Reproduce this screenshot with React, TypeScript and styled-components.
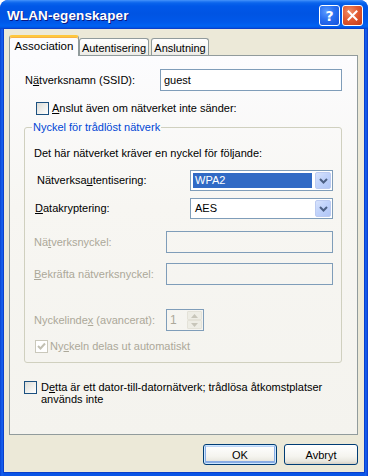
import React from "react";
import styled, { createGlobalStyle, css } from "styled-components";

const Global = createGlobalStyle`
  html, body { margin: 0; padding: 0; background: #ffffff; }
  body { font-family: "Liberation Sans", Arial, sans-serif; font-size: 11px; color: #000; }
  * { box-sizing: border-box; }
  u { text-decoration: underline; text-underline-offset: 1px; }
`;

const Window = styled.div`
  width: 368px;
  height: 476px;
  display: flex;
  flex-direction: column;
  background: linear-gradient(to right, #0843d0 0px, #1760ef 2px, #0a55e6 4px, #0a55e6 364px, #1760ef 366px, #0838c8 368px);
  border-radius: 8px 8px 0 0;
  overflow: hidden;
`;

const TitleBar = styled.div`
  height: 29px;
  flex: 0 0 29px;
  display: flex;
  align-items: center;
  padding: 0 5px 0 7px;
  background: linear-gradient(
    to bottom,
    #4a96fb 0px,
    #2a7ff5 1px,
    #0a64ec 3px,
    #0058e8 6px,
    #0054e3 14px,
    #0058ea 22px,
    #0062f2 26px,
    #0052e0 28px,
    #0045cc 29px
  );
  border-radius: 8px 8px 0 0;
`;

const TitleText = styled.div`
  font-family: "Liberation Sans", Arial, sans-serif;
  font-weight: bold;
  font-size: 13.5px;
  color: #ffffff;
  text-shadow: 1px 1px 0 #0a1883;
  padding-top: 2px;
  letter-spacing: 0.1px;
`;

const CaptionButtons = styled.div`
  margin-left: auto;
  display: flex;
  gap: 2px;
  padding-top: 2px;
`;

const CaptionButton = styled.div<{ $variant: "help" | "close" }>`
  width: 21px;
  height: 21px;
  border: 1px solid #ffffff;
  border-radius: 3px;
  display: flex;
  align-items: center;
  justify-content: center;
  color: #ffffff;
  font-family: "DejaVu Sans", sans-serif;
  font-weight: bold;
  font-size: 14px;
  ${(p) =>
    p.$variant === "help"
      ? css`
          background: radial-gradient(circle at 35% 30%, #5c9cff 0%, #2a6ff0 45%, #1450dc 100%);
        `
      : css`
          background: radial-gradient(circle at 35% 30%, #f0906a 0%, #e25b32 45%, #c43a17 100%);
        `}
`;

const Client = styled.div`
  flex: 1;
  margin: 0 4px 4px 4px;
  background: #ece9d8;
  box-shadow: 0 0 0 1px #0a3fcc;
  display: flex;
  flex-direction: column;
  padding: 6px 6px 0 5px;
`;

const TabStrip = styled.div`
  height: 20px;
  display: flex;
  align-items: flex-end;
  position: relative;
  z-index: 2;
`;

const Tab = styled.div<{ $active?: boolean; $width: number; $gap?: number }>`
  width: ${(p) => p.$width}px;
  margin-left: ${(p) => p.$gap ?? 0}px;
  border: 1px solid #919b9c;
  border-bottom: none;
  border-radius: 3px 3px 0 0;
  display: flex;
  justify-content: center;
  color: #000;
  ${(p) =>
    p.$active
      ? css`
          height: 21px;
          margin-bottom: -1px;
          background: #fcfcfe;
          border-top: 2px solid #ffc83c;
          box-shadow: inset 0 1px 0 #f7b245;
          align-items: center;
          padding-bottom: 2px;
          font-size: 11.5px;
        `
      : css`
          height: 17px;
          background: linear-gradient(to bottom, #ffffff 0%, #f7f7f4 50%, #ecebe6 100%);
          align-items: center;
          padding-top: 1px;
        `}
`;

const Panel = styled.div`
  height: 380px;
  border: 1px solid #919b9c;
  background: linear-gradient(to bottom, #fcfcfe 0%, #f7f6f2 40%, #f4f3ee 100%);
  padding: 0 15px;
  display: flex;
  flex-direction: column;
`;

const Row = styled.div<{ $top: number; $indent?: number; $height?: number }>`
  display: flex;
  align-items: center;
  margin-top: ${(p) => p.$top}px;
  padding-left: ${(p) => p.$indent ?? 0}px;
  height: ${(p) => (p.$height ? `${p.$height}px` : "auto")};
`;

const Label = styled.div<{ $width?: number; $disabled?: boolean }>`
  flex: 0 0 ${(p) => (p.$width ? `${p.$width}px` : "auto")};
  white-space: nowrap;
  line-height: 13px;
  color: ${(p) => (p.$disabled ? "#aca899" : "#000")};
`;

const TextBox = styled.div<{ $width: number; $height?: number; $disabled?: boolean }>`
  width: ${(p) => p.$width}px;
  height: ${(p) => p.$height ?? 22}px;
  border: 1px solid #7f9db9;
  background: ${(p) => (p.$disabled ? "transparent" : "#ffffff")};
  display: flex;
  align-items: center;
  padding-left: 3px;
  line-height: 13px;
  color: ${(p) => (p.$disabled ? "#aca899" : "#000")};
`;

const Box = styled.div<{ $disabled?: boolean }>`
  flex: 0 0 13px;
  width: 13px;
  height: 13px;
  border: 1px solid ${(p) => (p.$disabled ? "#cac8bb" : "#1c5180")};
  background: ${(p) => (p.$disabled ? "#ffffff" : "linear-gradient(135deg, #dcdcd7 0%, #f2f2ef 60%, #ffffff 100%)")};
  display: flex;
  align-items: center;
  justify-content: center;
`;

const CheckRow = styled.div<{ $top: number; $indent?: number; $gap: number }>`
  display: flex;
  align-items: flex-start;
  gap: ${(p) => p.$gap}px;
  margin-top: ${(p) => p.$top}px;
  margin-left: ${(p) => p.$indent ?? 0}px;
`;

const CheckText = styled.div<{ $disabled?: boolean; $lh?: number }>`
  line-height: ${(p) => p.$lh ?? 13}px;
  color: ${(p) => (p.$disabled ? "#aca899" : "#000")};
  white-space: nowrap;
`;

const Group = styled.fieldset`
  margin: 6px 0 0 -1px;
  width: 318px;
  border: 1px solid #d0d0bf;
  border-radius: 3px;
  padding: 0 8px 9px 9px;
  display: flex;
  flex-direction: column;
  min-width: 0;
`;

const Legend = styled.legend`
  color: #0046d5;
  padding: 0 1px;
  margin-left: -2px;
  line-height: 13px;
`;

const Combo = styled.div<{ $width: number }>`
  width: ${(p) => p.$width}px;
  height: 21px;
  border: 1px solid #7f9db9;
  background: #ffffff;
  display: flex;
  align-items: stretch;
  padding: 1px;
`;

const ComboValue = styled.div<{ $selected?: boolean }>`
  flex: 1;
  display: flex;
  align-items: center;
  margin: 1px 3px 1px 1px;
  padding-left: 2px;
  line-height: 13px;
  background: ${(p) => (p.$selected ? "#316ac5" : "transparent")};
  color: ${(p) => (p.$selected ? "#ffffff" : "#000")};
`;

const ComboButton = styled.div`
  flex: 0 0 16px;
  border: 1px solid #bccbf1;
  border-radius: 2px;
  background: linear-gradient(135deg, #d8e3fc 0%, #c1d3fb 45%, #b1c6f6 100%);
  display: flex;
  align-items: center;
  justify-content: center;
`;

const Spinner = styled.div`
  width: 38px;
  height: 22px;
  border: 1px solid #7f9db9;
  display: flex;
  padding: 1px;
`;

const SpinValue = styled.div`
  flex: 1;
  display: flex;
  align-items: center;
  padding-left: 2px;
  color: #aca899;
  font-size: 12px;
`;

const SpinButtons = styled.div`
  flex: 0 0 15px;
  display: flex;
  flex-direction: column;
`;

const SpinButton = styled.div`
  flex: 1;
  background: #eeede5;
  border: 1px solid #e4e2d8;
  border-radius: 1px;
  display: flex;
  align-items: center;
  justify-content: center;
`;

const ButtonRow = styled.div`
  display: flex;
  justify-content: flex-end;
  gap: 7px;
  margin-top: 9px;
`;

const PushButton = styled.div<{ $default?: boolean }>`
  width: 74px;
  height: 21px;
  border: 1px solid #003c74;
  border-radius: 3px;
  display: flex;
  align-items: center;
  justify-content: center;
  background: linear-gradient(to bottom, #ffffff 0%, #f5f4ef 60%, #e9e7df 85%, #d6d0c5 100%);
  ${(p) =>
    p.$default &&
    css`
      box-shadow: inset 0 0 0 1px #cee7ff, inset 0 -1px 0 2px #89ade4, inset 0 1px 0 1px #bcd4f6;
    `}
`;

const Chevron = () => (
  <svg width="9" height="6" viewBox="0 0 9 6">
    <path d="M1 1 L4.5 4.5 L8 1" fill="none" stroke="#4d6185" strokeWidth="2" />
  </svg>
);

const Check = ({ color }: { color: string }) => (
  <svg width="9" height="9" viewBox="0 0 9 9">
    <path d="M1 4 L3.5 6.5 L8 1.5" fill="none" stroke={color} strokeWidth="2" />
  </svg>
);

const Arrow = ({ up }: { up?: boolean }) => (
  <svg width="7" height="4" viewBox="0 0 7 4">
    <path d={up ? "M0 4 L3.5 0 L7 4 Z" : "M0 0 L3.5 4 L7 0 Z"} fill="#c8c6ba" />
  </svg>
);

const CloseX = () => (
  <svg width="11" height="11" viewBox="0 0 11 11">
    <path d="M1.5 1.5 L9.5 9.5 M9.5 1.5 L1.5 9.5" stroke="#ffffff" strokeWidth="2" strokeLinecap="square" />
  </svg>
);

export default function App() {
  return (
    <>
      <Global />
      <Window>
        <TitleBar>
          <TitleText>WLAN-egenskaper</TitleText>
          <CaptionButtons>
            <CaptionButton $variant="help">?</CaptionButton>
            <CaptionButton $variant="close">
              <CloseX />
            </CaptionButton>
          </CaptionButtons>
        </TitleBar>
        <Client>
          <TabStrip>
            <Tab $active $width={70}>Association</Tab>
            <Tab $width={70}>Autentisering</Tab>
            <Tab $width={58} $gap={2}>Anslutning</Tab>
          </TabStrip>
          <Panel>
            <Row $top={13} $height={22}>
              <Label $width={135}>
                N<u>ä</u>tverksnamn (SSID):
              </Label>
              <TextBox $width={182}>guest</TextBox>
            </Row>
            <CheckRow $top={11} $indent={11} $gap={3}>
              <Box />
              <CheckText>
                <u>A</u>nslut även om nätverket inte sänder:
              </CheckText>
            </CheckRow>
            <Group>
              <Legend>Nyckel för trådlöst nätverk</Legend>
              <Row $top={13}>
                <Label>Det här nätverket kräver en nyckel för följande:</Label>
              </Row>
              <Row $top={10} $indent={3}>
                <Label $width={153}>
                  Nätverksa<u>u</u>tentisering:
                </Label>
                <Combo $width={143}>
                  <ComboValue $selected>WPA2</ComboValue>
                  <ComboButton>
                    <Chevron />
                  </ComboButton>
                </Combo>
              </Row>
              <Row $top={7} $indent={1}>
                <Label $width={155}>
                  <u>D</u>atakryptering:
                </Label>
                <Combo $width={143}>
                  <ComboValue>AES</ComboValue>
                  <ComboButton>
                    <Chevron />
                  </ComboButton>
                </Combo>
              </Row>
              <Row $top={12}>
                <Label $width={132} $disabled>
                  Nä<u>t</u>verksnyckel:
                </Label>
                <TextBox $width={167} $disabled />
              </Row>
              <Row $top={10}>
                <Label $width={132} $disabled>
                  <u>B</u>ekräfta nätverksnyckel:
                </Label>
                <TextBox $width={167} $disabled />
              </Row>
              <Row $top={24}>
                <Label $width={132} $disabled>
                  Nyckelinde<u>x</u> (avancerat):
                </Label>
                <Spinner>
                  <SpinValue>1</SpinValue>
                  <SpinButtons>
                    <SpinButton>
                      <Arrow up />
                    </SpinButton>
                    <SpinButton>
                      <Arrow />
                    </SpinButton>
                  </SpinButtons>
                </Spinner>
              </Row>
              <CheckRow $top={9} $indent={1} $gap={2}>
                <Box $disabled>
                  <Check color="#c2c0b3" />
                </Box>
                <CheckText $disabled>
                  Ny<u>c</u>keln delas ut automatiskt
                </CheckText>
              </CheckRow>
            </Group>
            <CheckRow $top={18} $indent={-1} $gap={4}>
              <Box />
              <CheckText $lh={12}>
                D<u>e</u>tta är ett dator-till-datornätverk; trådlösa åtkomstplatser
                <br />
                används inte
              </CheckText>
            </CheckRow>
          </Panel>
          <ButtonRow>
            <PushButton $default>OK</PushButton>
            <PushButton>Avbryt</PushButton>
          </ButtonRow>
        </Client>
      </Window>
    </>
  );
}
